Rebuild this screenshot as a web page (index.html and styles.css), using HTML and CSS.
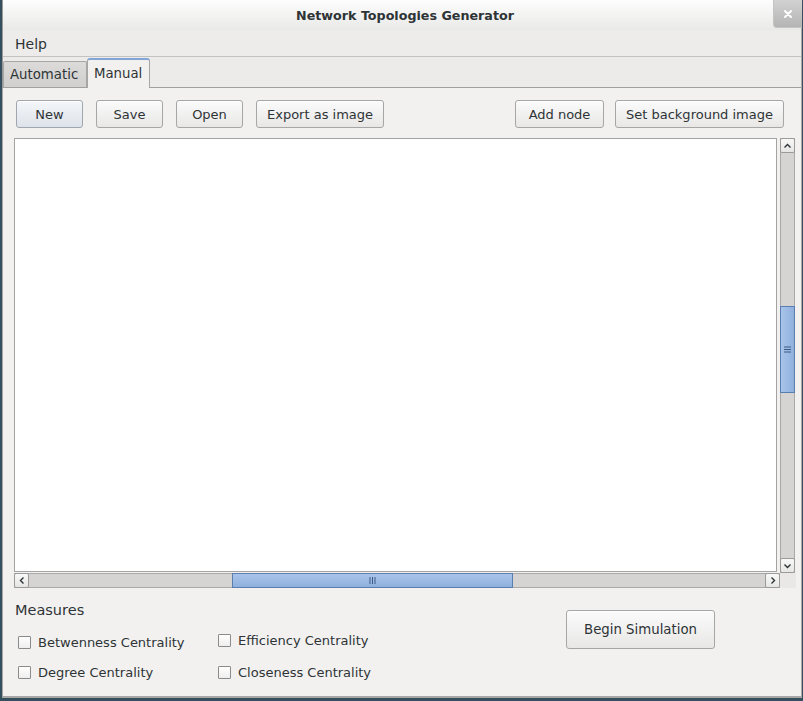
FILE: index.html
```html
<!DOCTYPE html>
<html>
<head>
<meta charset="utf-8">
<title>Network Topologies Generator</title>
<link rel="stylesheet" href="styles.css">
</head>
<body>
<div class="window">
  <div class="titlebar">
    <span class="title">Network Topologies Generator</span>
    <div class="close">
      <svg width="10" height="10" viewBox="0 0 10 10"><path d="M2 2 L8 8 M8 2 L2 8" stroke="#ffffff" stroke-width="2" stroke-linecap="round"/></svg>
    </div>
  </div>
  <div class="menubar"><span class="menu-item">Help</span></div>
  <div class="tabs">
    <div class="tab">Automatic</div>
    <div class="tab active">Manual</div>
    <div class="tab-fill"></div>
  </div>
  <div class="pane">
    <div class="toolbar">
      <button class="btn btn-default">New</button>
      <button class="btn">Save</button>
      <button class="btn">Open</button>
      <button class="btn">Export as image</button>
      <div class="spacer"></div>
      <div class="btn-group">
        <button class="btn btn-add">Add node</button>
        <button class="btn">Set background image</button>
      </div>
    </div>
    <div class="scrollarea">
      <div class="scroll-row">
        <div class="canvas"></div>
        <div class="vscroll">
          <div class="sb-btn sb-up">
            <svg width="9" height="6" viewBox="0 0 9 6"><path d="M1.5 4.5 L4.5 1.5 L7.5 4.5" fill="none" stroke="#2e3436" stroke-width="1.4"/></svg>
          </div>
          <div class="vtrack">
            <div class="vthumb">
              <svg width="7" height="7" viewBox="0 0 7 7"><path d="M0 1 H7 M0 3.5 H7 M0 6 H7" stroke="#3c5a86" stroke-width="1"/></svg>
            </div>
          </div>
          <div class="sb-btn sb-down">
            <svg width="9" height="6" viewBox="0 0 9 6"><path d="M1.5 1.5 L4.5 4.5 L7.5 1.5" fill="none" stroke="#2e3436" stroke-width="1.4"/></svg>
          </div>
        </div>
      </div>
      <div class="hscroll-row">
        <div class="hscroll">
          <div class="sb-btn sb-left">
            <svg width="6" height="9" viewBox="0 0 6 9"><path d="M4.5 1.5 L1.5 4.5 L4.5 7.5" fill="none" stroke="#2e3436" stroke-width="1.4"/></svg>
          </div>
          <div class="htrack">
            <div class="hthumb">
              <svg width="7" height="7" viewBox="0 0 7 7"><path d="M1 0 V7 M3.5 0 V7 M6 0 V7" stroke="#3c5a86" stroke-width="1"/></svg>
            </div>
          </div>
          <div class="sb-btn sb-right">
            <svg width="6" height="9" viewBox="0 0 6 9"><path d="M1.5 1.5 L4.5 4.5 L1.5 7.5" fill="none" stroke="#2e3436" stroke-width="1.4"/></svg>
          </div>
        </div>
        <div class="corner"></div>
      </div>
    </div>
    <div class="bottom">
      <div class="measures">
        <div class="measures-title">Measures</div>
        <div class="measures-grid">
          <div class="col col-a">
            <label class="check"><span class="box"></span>Betwenness Centrality</label>
            <label class="check"><span class="box"></span>Degree Centrality</label>
          </div>
          <div class="col col-b">
            <label class="check"><span class="box"></span>Efficiency Centrality</label>
            <label class="check"><span class="box"></span>Closeness Centrality</label>
          </div>
        </div>
      </div>
      <button class="btn btn-big">Begin Simulation</button>
    </div>
  </div>
</div>
</body>
</html>
```
FILE: styles.css
```css
* {
  box-sizing: border-box;
}

html, body {
  margin: 0;
  padding: 0;
}

body {
  background: #34505e;
  width: 803px;
  height: 701px;
  overflow: hidden;
  font-family: "DejaVu Sans", sans-serif;
  font-size: 13px;
  color: #2e3436;
}

.window {
  margin-left: 2px;
  width: 800px;
  height: 698px;
  border-left: 1px solid #9a9a9a;
  border-right: 1px solid #a9a9a9;
  border-bottom: 2px solid #a7a7a7;
  background: #f2f1f0;
  display: flex;
  flex-direction: column;
}

.titlebar {
  position: relative;
  height: 30px;
  background: linear-gradient(#fdfdfd, #e9e9e8);
  display: flex;
  align-items: center;
  justify-content: center;
  flex: none;
}

.title {
  font-weight: bold;
  font-size: 12.7px;
  color: #2e3436;
  padding-left: 6px;
}

.close {
  position: absolute;
  top: 0;
  right: -1px;
  width: 29px;
  height: 28px;
  border-radius: 0 0 0 4px;
  background: linear-gradient(#d2d2d2, #b4b4b4);
  border-left: 1px solid #c4c4c4;
  border-bottom: 1px solid #c4c4c4;
  display: flex;
  align-items: center;
  justify-content: center;
}

.menubar {
  height: 27px;
  background: #edeceb;
  border-bottom: 1px solid #c3c3c3;
  display: flex;
  align-items: center;
  padding-left: 12px;
  flex: none;
}

.menu-item {
  font-size: 14px;
  padding-top: 1px;
}

.tabs {
  height: 31px;
  display: flex;
  align-items: flex-end;
  background: #ecebea;
  flex: none;
}

.tab {
  height: 27px;
  width: 84px;
  padding-left: 6px;
  display: flex;
  align-items: center;
  border: 1px solid #a6a6a6;
  border-bottom: 1px solid #a0a0a0;
  background: linear-gradient(#dcdbd9, #d0cfcd);
  font-size: 13.3px;
  border-radius: 2px 2px 0 0;
}

.tab.active {
  height: 30px;
  width: 63px;
  padding-left: 6px;
  padding-bottom: 2px;
  border-top: 2px solid #7fa6d6;
  border-left: 1px solid #a6a6a6;
  border-right: 1px solid #a6a6a6;
  border-bottom: none;
  background: #f2f1f0;
  border-radius: 3px 3px 0 0;
}

.tab-fill {
  flex: 1;
  height: 1px;
  background: #a0a0a0;
}

.pane {
  flex: 1;
  display: flex;
  flex-direction: column;
  border-left: 1px solid #a6a6a6;
  margin-left: -1px;
}

.toolbar {
  display: flex;
  gap: 13px;
  padding: 12px 17px 0 13px;
}

.spacer {
  flex: 1;
  margin-left: -2px;
}

.btn-group {
  display: flex;
  gap: 11px;
}

.btn {
  font-family: "DejaVu Sans", sans-serif;
  font-size: 13px;
  color: #2e3436;
  height: 28px;
  min-width: 67px;
  padding: 0 10px;
  border: 1px solid #a6a6a6;
  border-radius: 3px;
  background: linear-gradient(#fbfbfb, #e8e7e6);
  box-shadow: inset 0 1px 0 #ffffff;
  margin: 0;
}

.btn-add {
  min-width: 89px;
}

.btn-default {
  background: linear-gradient(#f4f6f9, #dde3ea);
  border-color: #a0a6ad;
}

.scrollarea {
  margin-top: 10px;
  padding-left: 11px;
}

.scroll-row {
  display: flex;
  align-items: flex-start;
}

.canvas {
  width: 763px;
  height: 434px;
  background: #ffffff;
  border: 1px solid #a3a3a3;
}

.vscroll {
  margin-left: 3px;
  width: 15px;
  height: 435px;
  display: flex;
  flex-direction: column;
  background: #d5d4d2;
  border-left: 1px solid #a9a9a9;
  border-right: 1px solid #a9a9a9;
}

.sb-btn {
  flex: none;
  background: linear-gradient(#f8f8f8, #e6e6e5);
  border: 1px solid #9b9b9b;
  display: flex;
  align-items: center;
  justify-content: center;
}

.sb-up,
.sb-down {
  height: 15px;
  margin: 0 -1px;
  border-radius: 2px;
}

.vtrack {
  flex: 1;
  padding-top: 153px;
}

.vthumb {
  margin: 0 -1px;
  height: 87px;
  border: 1px solid #5b7eb0;
  background: linear-gradient(90deg, #a9c4ea, #8fb0dd);
  display: flex;
  align-items: center;
  justify-content: center;
}

.hscroll-row {
  display: flex;
}

.hscroll {
  width: 766px;
  height: 15px;
  display: flex;
  background: #d5d4d2;
  border-top: 1px solid #a9a9a9;
  border-bottom: 1px solid #a9a9a9;
}

.sb-left,
.sb-right {
  width: 15px;
  margin: -1px 0;
  border-radius: 2px;
}

.htrack {
  flex: 1;
  padding-left: 203px;
}

.hthumb {
  margin: -1px 0;
  height: 15px;
  width: 281px;
  border: 1px solid #5b7eb0;
  background: linear-gradient(#a9c4ea, #8fb0dd);
  display: flex;
  align-items: center;
  justify-content: center;
}

.corner {
  width: 16px;
  height: 15px;
  background: #e9e8e6;
}

.bottom {
  display: flex;
  justify-content: space-between;
  align-items: flex-start;
  padding: 14px 86px 0 12px;
}

.measures-title {
  font-size: 14.5px;
  line-height: 17px;
}

.measures-grid {
  display: flex;
  padding-left: 3px;
}

.col {
  display: flex;
  flex-direction: column;
}

.col-a {
  width: 200px;
  margin-top: 14px;
  gap: 12px;
}

.col-b {
  margin-top: 12px;
  gap: 14px;
}

.check {
  display: flex;
  align-items: center;
  height: 18px;
  font-size: 13px;
}

.box {
  width: 13px;
  height: 13px;
  border: 1px solid #8a8a8a;
  border-radius: 1px;
  background: linear-gradient(#ffffff, #eeeeee);
  margin-right: 7px;
}

.btn-big {
  margin-top: 8px;
  height: 39px;
  width: 149px;
  padding: 0;
  font-size: 13.3px;
}
```
